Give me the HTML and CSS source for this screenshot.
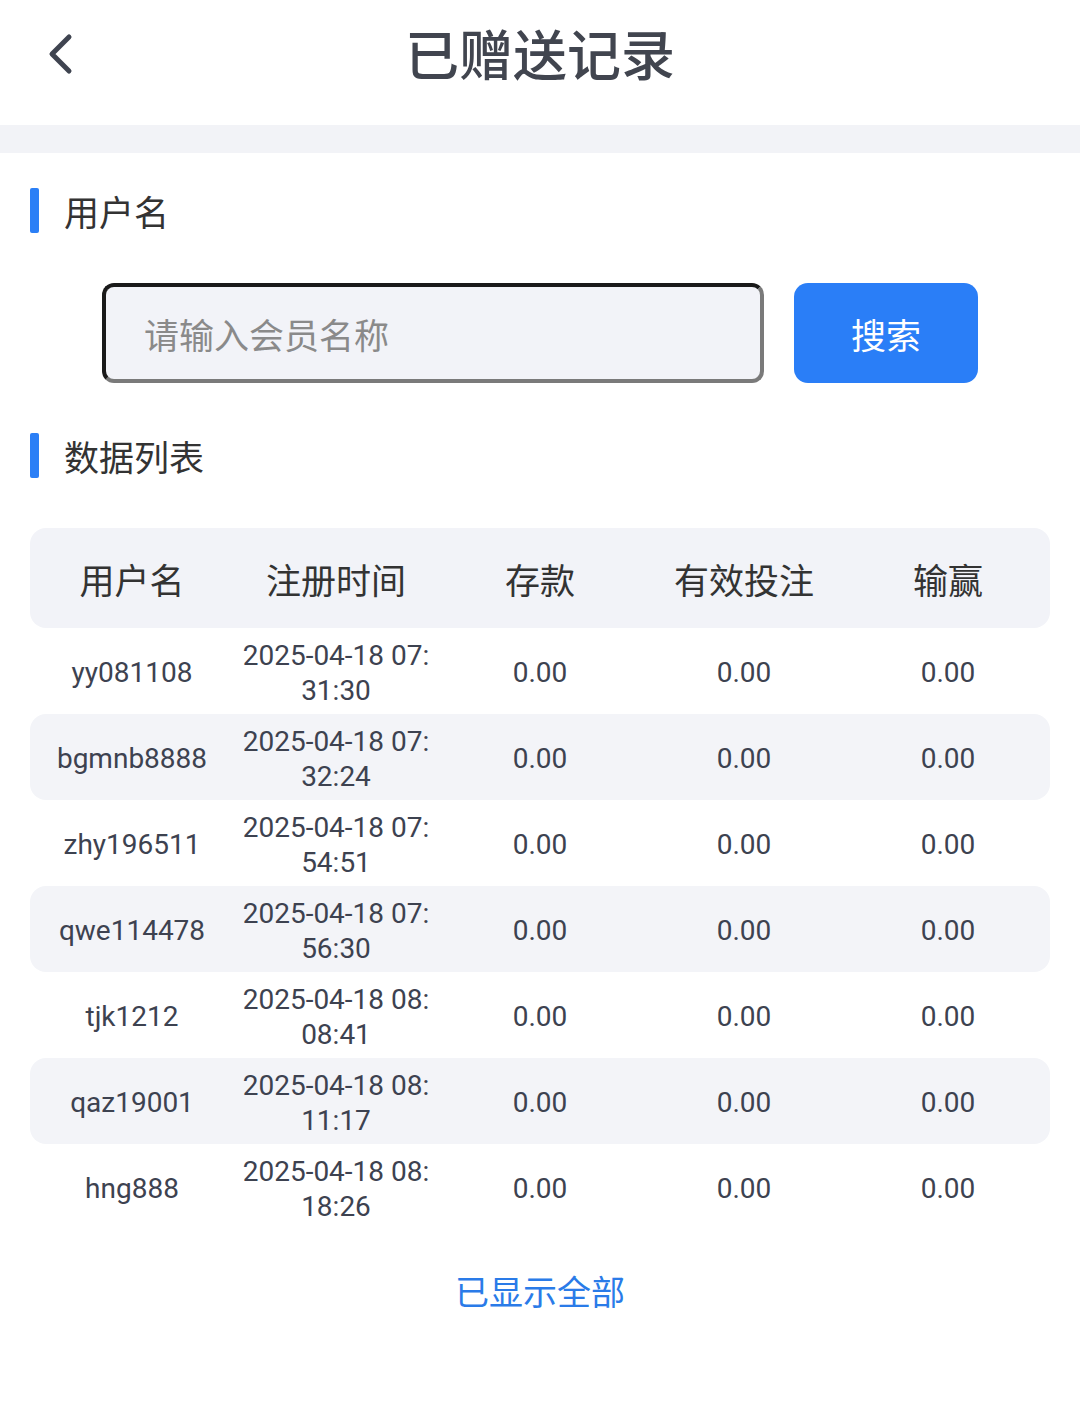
FILE: index.html
```html
<!DOCTYPE html>
<html lang="zh-CN">
<head>
    <meta charset="UTF-8">
    <meta name="viewport" content="width=device-width, initial-scale=1.0">
    <title>已赠送记录</title>
    <link rel="stylesheet" href="styles.css">
</head>
<body>
    <div class="header">
        <a class="back" href="#">
            <svg width="30" height="42" viewBox="0 0 30 42"><path d="M24 4 L7 21 L24 38" fill="none" stroke="#3f4450" stroke-width="5" stroke-linecap="round" stroke-linejoin="round"/></svg>
        </a>
        <h1>已赠送记录</h1>
    </div>
    <div class="gap"></div>

    <div class="section-title">用户名</div>
    <div class="search-row">
        <input type="text" class="search-input" placeholder="请输入会员名称">
        <button type="button" class="btn-search">搜索</button>
    </div>

    <div class="section-title">数据列表</div>
    <div class="list">
        <div class="row head">
            <div>用户名</div>
            <div>注册时间</div>
            <div>存款</div>
            <div>有效投注</div>
            <div>输赢</div>
        </div>
        <div class="row"><div>yy081108</div><div class="time">2025-04-18 07:31:30</div><div>0.00</div><div>0.00</div><div>0.00</div></div>
        <div class="row alt"><div>bgmnb8888</div><div class="time">2025-04-18 07:32:24</div><div>0.00</div><div>0.00</div><div>0.00</div></div>
        <div class="row"><div>zhy196511</div><div class="time">2025-04-18 07:54:51</div><div>0.00</div><div>0.00</div><div>0.00</div></div>
        <div class="row alt"><div>qwe114478</div><div class="time">2025-04-18 07:56:30</div><div>0.00</div><div>0.00</div><div>0.00</div></div>
        <div class="row"><div>tjk1212</div><div class="time">2025-04-18 08:08:41</div><div>0.00</div><div>0.00</div><div>0.00</div></div>
        <div class="row alt"><div>qaz19001</div><div class="time">2025-04-18 08:11:17</div><div>0.00</div><div>0.00</div><div>0.00</div></div>
        <div class="row"><div>hng888</div><div class="time">2025-04-18 08:18:26</div><div>0.00</div><div>0.00</div><div>0.00</div></div>
    </div>
    <div class="finished">已显示全部</div>
</body>
</html>
```

FILE: styles.css
```css
body {
    margin: 0;
    background: #fff;
    font-family: "Noto Sans CJK SC", "Noto Sans", sans-serif;
    color: #333;
}
.header {
    height: 125px;
    position: relative;
    display: flex;
    align-items: center;
    justify-content: center;
}
.back {
    position: absolute;
    left: 45px;
    top: 33px;
}
.header h1 {
    margin: 0;
    font-size: 54px;
    font-weight: 500;
    color: #41454f;
    margin-top: -20px;
}
.gap {
    height: 28px;
    background: #f2f3f7;
}
.section-title {
    margin: 35px 0 0 30px;
    height: 45px;
    display: flex;
    align-items: center;
    font-size: 35px;
    color: #333;
}
.section-title::before {
    content: "";
    width: 9px;
    height: 45px;
    background: #2b7ff6;
    border-radius: 2px;
    margin-right: 25px;
}
.search-row {
    display: flex;
    margin: 50px 0 50px 102px;
    gap: 30px;
}
.search-input {
    width: 662px;
    height: 100px;
    box-sizing: border-box;
    border: 4px solid #7a7a7a;
    border-top-color: #1a1a1a;
    border-left-color: #1a1a1a;
    border-radius: 12px;
    background: #f2f3f8;
    padding: 0 38px;
    font-size: 35px;
    font-family: inherit;
}
.search-input::placeholder {
    color: #8a8a8a;
}
.btn-search {
    width: 184px;
    height: 100px;
    border: none;
    border-radius: 14px;
    background: #2a7ef7;
    color: #fff;
    font-size: 35px;
    font-family: inherit;
}
.list {
    margin: 50px 30px 0;
}
.row {
    display: grid;
    grid-template-columns: repeat(5, 1fr);
    align-items: center;
    height: 86px;
    border-radius: 16px;
    font-family: Roboto, "Noto Sans CJK SC", sans-serif;
    font-size: 28px;
    color: #3d4250;
    text-align: center;
}
.row > div {
    padding: 0 4px;
    line-height: 35px;
    margin-top: 3px;
}
.row .time {
    word-break: break-all;
}
.row.head {
    height: 100px;
    background: #f2f3f8;
    font-family: "Noto Sans CJK SC", sans-serif;
    font-size: 35px;
    color: #333;
}
.row.head > div {
    margin-top: 0;
}
.row.alt {
    background: #f3f4f8;
}
.finished {
    text-align: center;
    margin-top: 36px;
    font-size: 34px;
    color: #2a7be8;
}
```
